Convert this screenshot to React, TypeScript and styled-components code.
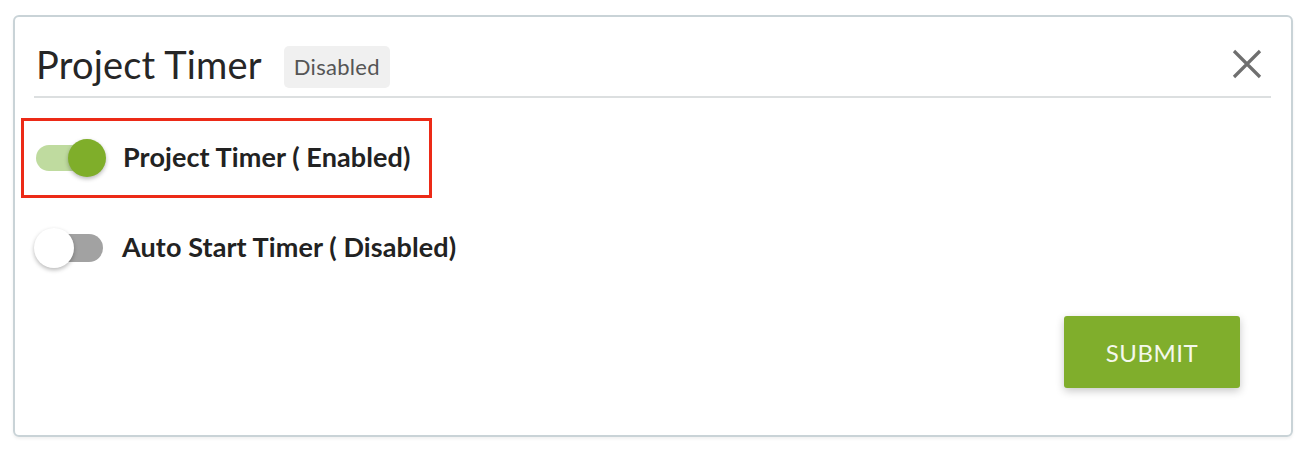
import styled, { createGlobalStyle } from 'styled-components';

const GlobalStyle = createGlobalStyle`
    body {
        margin: 0;
        background: #ffffff;
        font-family: 'Lato', 'Noto Sans', sans-serif;
    }
`;

const Page = styled.div`
    padding: 15px 15px 13px 13px;
`;

const Card = styled.div`
    border: 2px solid #c9d3d7;
    border-radius: 6px;
    box-shadow: 0 2px 3px rgba(0, 0, 0, 0.06);
    padding: 24px 20px 47px 19px;
    height: 422px;
    box-sizing: border-box;
    display: flex;
    flex-direction: column;
`;

const Header = styled.div`
    display: flex;
    align-items: center;
    border-bottom: 2px solid #dcdfe0;
    padding: 0 0 9px 2px;
    height: 46px;
`;

const Title = styled.h2`
    margin: 0;
    font-size: 38px;
    font-weight: 400;
    color: #262626;
    letter-spacing: 0.2px;
`;

const Badge = styled.span`
    margin: 6px 0 0 22px;
    background: #f0f0f0;
    border-radius: 5px;
    padding: 7px 10px 8px;
    font-size: 22px;
    letter-spacing: 0.3px;
    color: #555;
`;

const Close = styled.button`
    margin-left: auto;
    margin-right: 8px;
    border: none;
    background: none;
    padding: 0;
    display: flex;
    cursor: pointer;
`;

const Highlight = styled.div`
    margin: 20px 0 0 -13px;
    width: 411px;
    height: 80px;
    box-sizing: border-box;
    border: 3px solid #ec2a17;
    display: flex;
    align-items: center;
    padding-left: 11px;
`;

const Row = styled.div`
    display: flex;
    align-items: center;
    margin-top: 22px;
    height: 56px;
`;

const Switch = styled.span`
    display: flex;
    align-items: center;
    width: 72px;
    flex-shrink: 0;
`;

const Track = styled.span<{ $on: boolean }>`
    position: relative;
    width: ${(p) => (p.$on ? '58px' : '66px')};
    height: ${(p) => (p.$on ? '26px' : '28px')};
    border-radius: 14px;
    background: ${(p) => (p.$on ? '#bfdb9f' : '#a2a2a2')};
    margin-left: ${(p) => (p.$on ? '1px' : '3px')};
`;

const Knob = styled.span<{ $on: boolean }>`
    position: absolute;
    top: 50%;
    left: ${(p) => (p.$on ? '32px' : '-3px')};
    transform: translateY(-50%);
    width: ${(p) => (p.$on ? '38px' : '40px')};
    height: ${(p) => (p.$on ? '38px' : '40px')};
    border-radius: 50%;
    background: ${(p) => (p.$on ? '#7fae2a' : '#ffffff')};
    box-shadow: 0 2px 4px rgba(0, 0, 0, 0.28);
`;

const Label = styled.span`
    margin-left: 16px;
    padding-bottom: 4px;
    font-size: 27px;
    font-weight: 700;
    letter-spacing: 0.1px;
    color: #222;
`;

const Footer = styled.div`
    margin-top: auto;
    display: flex;
    justify-content: flex-end;
    padding-right: 31px;
`;

const Submit = styled.button`
    width: 176px;
    height: 72px;
    border: none;
    border-radius: 3px;
    background: #80ae2c;
    color: #f4f8ec;
    font-family: 'Lato', 'Noto Sans', sans-serif;
    font-size: 24px;
    letter-spacing: 0.5px;
    box-shadow: 0 3px 8px rgba(0, 0, 0, 0.22);
    cursor: pointer;
`;

const Toggle = ({ on }: { on: boolean }) => (
    <Switch>
        <Track $on={on}>
            <Knob $on={on} />
        </Track>
    </Switch>
);

const App = () => (
    <>
        <GlobalStyle />
        <Page>
            <Card>
                <Header>
                    <Title>Project Timer</Title>
                    <Badge>Disabled</Badge>
                    <Close aria-label="close">
                        <svg width="32" height="32" viewBox="0 0 32 32">
                            <path d="M3 3 L29 29 M29 3 L3 29" stroke="#6f6f6f" strokeWidth="3.2" />
                        </svg>
                    </Close>
                </Header>
                <Highlight>
                    <Toggle on />
                    <Label>Project Timer ( Enabled)</Label>
                </Highlight>
                <Row>
                    <Toggle on={false} />
                    <Label>Auto Start Timer ( Disabled)</Label>
                </Row>
                <Footer>
                    <Submit>SUBMIT</Submit>
                </Footer>
            </Card>
        </Page>
    </>
);

export default App;
